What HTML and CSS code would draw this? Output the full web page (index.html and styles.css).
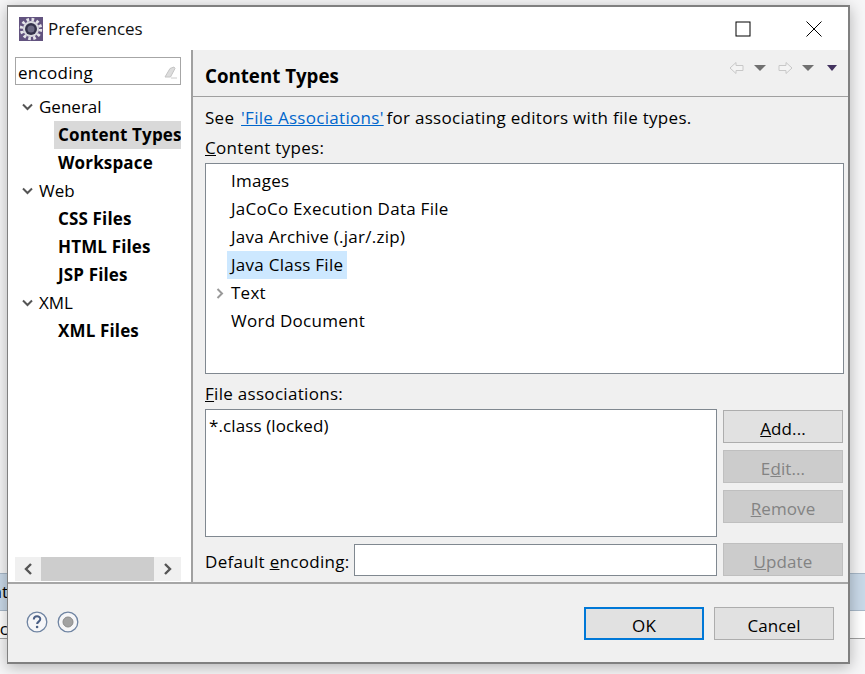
FILE: index.html
```html
<!DOCTYPE html>
<html lang="en">
<head>
<meta charset="utf-8">
<title>Preferences</title>
<link rel="stylesheet" href="styles.css">
</head>
<body>
<div class="backdrop">
  <div class="bg-band"><span class="bg-text">at</span></div>
  <div class="bg-row"><span class="bg-text">nc</span></div>
</div>
<main class="window">
  <header class="titlebar">
    <svg class="app-icon" width="24" height="24" viewBox="0 0 24 24">
      <rect width="24" height="24" fill="#62537f"/>
      <circle cx="12" cy="12" r="9.5" fill="none" stroke="#e4e4e8" stroke-width="3.4" stroke-dasharray="2.6 2.4"/>
      <circle cx="12" cy="12" r="8" fill="#d8d8de"/>
      <circle cx="12" cy="12" r="6" fill="#33314a"/>
      <circle cx="12" cy="12" r="3.500" fill="#6b6982"/>
    </svg>
    <span class="title">Preferences</span>
    <div class="win-controls">
      <svg width="16" height="16" viewBox="0 0 16 16"><rect x="1" y="1" width="14" height="14" fill="none" stroke="#000"/></svg>
      <svg width="16" height="16" viewBox="0 0 16 16"><path d="M.5.5l15 15M15.500.5l-15 15" fill="none" stroke="#000"/></svg>
    </div>
  </header>
  <div class="body">
    <aside class="left">
      <div class="search">
        <span>encoding</span>
        <svg width="13" height="13" viewBox="0 0 13 13"><path d="M1 11L6 2.500 10 1l1 1.500-4.500 8.500z" fill="#ddd" stroke="#c4c4c4"/><path d="M7 12h6" stroke="#ccc"/></svg>
      </div>
      <ul class="tree">
        <li class="group"><svg class="chev" width="11" height="8" viewBox="0 0 11 8"><path d="M1 1.500l4.500 4.500 4.500-4.500" fill="none" stroke="#555" stroke-width="2"/></svg>General</li>
        <li class="leaf selected">Content Types</li>
        <li class="leaf">Workspace</li>
        <li class="group"><svg class="chev" width="11" height="8" viewBox="0 0 11 8"><path d="M1 1.500l4.500 4.500 4.500-4.500" fill="none" stroke="#555" stroke-width="2"/></svg>Web</li>
        <li class="leaf">CSS Files</li>
        <li class="leaf">HTML Files</li>
        <li class="leaf">JSP Files</li>
        <li class="group"><svg class="chev" width="11" height="8" viewBox="0 0 11 8"><path d="M1 1.500l4.500 4.500 4.500-4.500" fill="none" stroke="#555" stroke-width="2"/></svg>XML</li>
        <li class="leaf">XML Files</li>
      </ul>
      <div class="hscroll">
        <div class="arrow"><svg width="10" height="12" viewBox="0 0 10 12"><path d="M8 1L3 6l5 5" fill="none" stroke="#555" stroke-width="2.400"/></svg></div>
        <div class="thumb"></div>
        <div class="arrow"><svg width="10" height="12" viewBox="0 0 10 12"><path d="M2 1l5 5-5 5" fill="none" stroke="#555" stroke-width="2.400"/></svg></div>
      </div>
    </aside>
    <section class="right">
      <div class="page-head">
        <h1>Content Types</h1>
        <div class="nav">
          <svg width="16" height="14" viewBox="0 0 16 14"><path d="M7 1.500L1 7l6 5.500V9.500h7v-5H7z" fill="#f4f4f4" stroke="#c8c8c8"/></svg>
          <svg class="tri-gap" width="12" height="6" viewBox="0 0 12 6"><path d="M0 0h12L6 6z" fill="#707070"/></svg>
          <svg class="nav-gap" width="16" height="14" viewBox="0 0 16 14"><path d="M9 1.500L15 7l-6 5.500V9.500H2v-5h7z" fill="#f4f4f4" stroke="#c8c8c8"/></svg>
          <svg class="tri-gap" width="12" height="6" viewBox="0 0 12 6"><path d="M0 0h12L6 6z" fill="#707070"/></svg>
          <svg class="tri-last" width="10" height="6" viewBox="0 0 10 6"><path d="M0 0h10L5 6z" fill="#43335f"/></svg>
        </div>
      </div>
      <div class="page">
        <p class="desc">See <a href="#">'File Associations'</a> for associating editors with file types.</p>
        <div class="label label-types"><u>C</u>ontent types:</div>
        <div class="box types">
          <div class="type">Images</div>
          <div class="type">JaCoCo Execution Data File</div>
          <div class="type">Java Archive (.jar/.zip)</div>
          <div class="type"><span class="sel">Java Class File</span></div>
          <div class="type"><svg class="expander" width="8" height="11" viewBox="0 0 8 11"><path d="M1.500 1l4.500 4.500-4.500 4.500" fill="none" stroke="#999" stroke-width="2"/></svg>Text</div>
          <div class="type">Word Document</div>
        </div>
        <div class="label label-files"><u>F</u>ile associations:</div>
        <div class="assoc">
          <div class="box files">*.class (locked)</div>
          <div class="btn-col">
            <button class="btn"><u>A</u>dd...</button>
            <button class="btn off">E<u>d</u>it...</button>
            <button class="btn off"><u>R</u>emove</button>
          </div>
        </div>
        <div class="encoding">
          <span class="enc-label">Default <u>e</u>ncoding:</span>
          <div class="box enc-input"></div>
          <button class="btn off"><u>U</u>pdate</button>
        </div>
      </div>
    </section>
  </div>
  <footer class="footer">
    <div class="help">
      <svg width="22" height="22" viewBox="0 0 22 22"><circle cx="11" cy="11" r="9.800" fill="#f6f6f8" stroke="#6f84a2" stroke-width="1.300"/><path d="M7.800 8.500c0-4.300 6.500-4.300 6.500-.4 0 2.500-3.200 2.500-3.200 5" fill="none" stroke="#4a5f85" stroke-width="2"/><circle cx="11.100" cy="16" r="1.300" fill="#4a5f85"/></svg>
      <svg width="22" height="22" viewBox="0 0 22 22"><circle cx="11" cy="11" r="9.800" fill="#f6f6f8" stroke="#6f84a2" stroke-width="1.300"/><circle cx="11" cy="11" r="5" fill="#a2a2a2" stroke="#8c8c8c"/></svg>
    </div>
    <div class="actions">
      <button class="btn default">OK</button>
      <button class="btn">Cancel</button>
    </div>
  </footer>
</main>
</body>
</html>
```

FILE: styles.css
```css
* { box-sizing: border-box; }
html, body { margin: 0; height: 100%; }
body {
  position: relative;
  width: 865px;
  height: 674px;
  overflow: hidden;
  background: #f6f6f7;
  font-family: "Open Sans", "Noto Sans", sans-serif;
  font-size: 17px;
  color: #000;
}
.backdrop {
  position: absolute;
  left: 0;
  right: 0;
  top: 573px;
}
.bg-band {
  height: 38px;
  background: #c9d9e8;
  border-top: 1px solid #a8b8c8;
  border-bottom: 1px solid #a8b8c8;
  line-height: 36px;
  overflow: hidden;
}
.bg-row { height: 28px; background: #fff; border-bottom: 1px solid #a0a0a0; line-height: 36px; overflow: hidden; }
.bg-text { display: block; width: 8px; overflow: hidden; direction: rtl; }
.window {
  position: absolute;
  left: 7px;
  top: 5px;
  width: 843px;
  height: 659px;
  display: flex;
  flex-direction: column;
  background: #f0f0f0;
  border: 1px solid #808080;
  border-width: 2px 2px 2px 1px;
  box-shadow: 0 3px 14px rgba(0, 0, 0, .28);
}
.titlebar {
  height: 43px;
  flex: none;
  display: flex;
  align-items: center;
  background: #fff;
  padding: 0 0 0 11px;
}
.app-icon { margin-right: 5px; }
.title { font-size: 17px; color: #111; }
.win-controls {
  margin-left: auto;
  display: flex;
  gap: 55px;
  padding-right: 26px;
}
.body { height: 532px; flex: none; display: flex; }
.left {
  width: 185px;
  flex: none;
  background: #fff;
  padding: 7px 10px 1px 7px;
  border-right: 2px solid #a0a0a0;
  display: flex;
  flex-direction: column;
}
.search {
  height: 28px;
  border: 1px solid #a6a6a6;
  display: flex;
  align-items: center;
  justify-content: space-between;
  padding: 2px 3px 0 2px;
  flex: none;
  letter-spacing: .3px;
}
.tree { list-style: none; margin: 8px 0 0; padding: 0; flex: 1; }
.tree li { height: 28px; line-height: 28px; white-space: nowrap; }
.group { padding-left: 7px; display: flex; align-items: center; }
.chev { margin-right: 6px; flex: none; }
.leaf { margin-left: 39px; padding-left: 4px; font-weight: 700; letter-spacing: .15px; }
.selected { background: #d9d9d9; overflow: hidden; }
.hscroll { height: 24px; flex: none; display: flex; background: #f0f0f0; }
.arrow { width: 26px; display: flex; align-items: center; justify-content: center; }
.arrow + .thumb + .arrow { width: 27px; }
.thumb { width: 113px; background: #cdcdcd; }
.right { flex: 1; min-width: 0; display: flex; flex-direction: column; }
.page-head {
  height: 47px;
  flex: none;
  display: flex;
  align-items: center;
  padding: 4px 11px 0 12px;
  border-bottom: 1px solid #a0a0a0;
}
h1 { margin: 0; font-size: 18.7px; font-weight: 700; }
.nav { margin-left: auto; display: flex; align-items: center; margin-top: -14px; }
.tri-gap { margin-left: 9px; }
.nav-gap { margin-left: 11px; }
.tri-last { margin-left: 13px; }
.page { padding: 7px 4px 0 12px; letter-spacing: .3px; }
.desc { margin: 0; height: 28px; line-height: 28px; }
a { color: #0066cc; }
.desc a { margin: 0 -2px 0 2px; }
.label { line-height: 24px; height: 24px; }
.label-types { margin-top: 4px; }
.box { background: #fff; border: 1px solid #808890; }
.types { height: 211px; padding: 3px 0 0 21px; margin-top: 3px; }
.type { height: 28px; line-height: 28px; position: relative; padding-left: 4px; letter-spacing: .26px; }
.sel { display: inline-block; background: #cde8ff; margin-left: -4px; padding: 0 4px 0 4px; height: 28px; }
.expander { position: absolute; left: -11px; top: 9px; }
.label-files { margin-top: 8px; }
.assoc { display: flex; margin-top: 3px; }
.files { width: 512px; height: 128px; padding: 2px 3px; line-height: 28px; letter-spacing: .1px; }
.btn-col { margin-left: 6px; padding-top: 1px; display: flex; flex-direction: column; gap: 7px; }
.btn {
  width: 120px;
  height: 33px;
  flex: none;
  background: #e1e1e1;
  border: 1px solid #adadad;
  font: inherit;
  letter-spacing: .1px;
  color: #000;
  padding: 3px 0 0;
}
.btn.off { background: #cccccc; border-color: #bfbfbf; color: #838383; }
.encoding { display: flex; align-items: center; margin-top: 6px; }
.enc-label { width: 149px; flex: none; padding-top: 4px; }
.enc-input { width: 363px; height: 32px; margin-right: 6px; }
.footer {
  height: 80px;
  flex: none;
  display: flex;
  align-items: center;
  justify-content: space-between;
  border-top: 2px solid #a6a6a6;
  padding: 0 14px 0 18px;
}
.help { display: flex; gap: 9px; margin-top: -2px; }
.actions { display: flex; gap: 10px; margin-top: 1px; }
.btn.default { border: 2px solid #0078d7; }
```
